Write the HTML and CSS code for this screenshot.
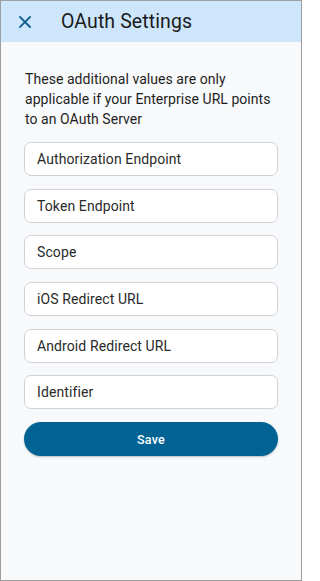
FILE: index.html
```html
<!DOCTYPE html>
<html lang="en">
<head>
<meta charset="utf-8">
<title>OAuth Settings</title>
<link rel="stylesheet" href="styles.css">
</head>
<body>
<div class="frame">
  <header class="appbar">
    <button class="close" aria-label="Close">
      <svg width="12" height="12" viewBox="0 0 12 12"><path d="M1 1 L11 11 M11 1 L1 11" stroke="#0a5f8c" stroke-width="1.8" stroke-linecap="square"/></svg>
    </button>
    <h1 class="title">OAuth Settings</h1>
  </header>
  <main class="content">
    <p class="intro">These additional values are only applicable if your Enterprise URL points to an OAuth Server</p>
    <div class="fields">
      <div class="field">Authorization Endpoint</div>
      <div class="field">Token Endpoint</div>
      <div class="field">Scope</div>
      <div class="field">iOS Redirect URL</div>
      <div class="field">Android Redirect URL</div>
      <div class="field">Identifier</div>
      <button class="save">Save</button>
    </div>
  </main>
</div>
</body>
</html>
```
FILE: styles.css
```css
* { box-sizing: border-box; }
html, body { margin: 0; padding: 0; overflow: hidden; }
body {
  width: 302px;
  height: 581px;
  font-family: Roboto, "Noto Sans", sans-serif;
  background: #ffffff;
}
.frame {
  width: 302px;
  height: 581px;
  border: 1px solid #9e9e9e;
  background: #f8f9fb;
  display: flex;
  flex-direction: column;
}
.appbar {
  height: 41px;
  background: #cde6fb;
  display: flex;
  align-items: center;
  flex-shrink: 0;
}
.close {
  width: 24px;
  height: 24px;
  margin-left: 12px;
  padding: 0;
  border: none;
  background: transparent;
  display: flex;
  align-items: center;
  justify-content: center;
}
.title {
  margin: 0 0 0 24px;
  font-size: 19.5px;
  font-weight: 400;
  color: #1b1b1b;
  letter-spacing: 0.1px;
}
.content {
  padding: 27px 23px 0 23px;
}
.intro {
  margin: 0 0 0 1px;
  font-size: 14px;
  line-height: 20px;
  color: #1f1f1f;
  letter-spacing: 0.05px;
}
.fields {
  margin-top: 13px;
  display: flex;
  flex-direction: column;
  gap: 12.7px;
}
.field {
  height: 34px;
  background: #ffffff;
  border: 1px solid #cfd3d8;
  border-radius: 7px;
  display: flex;
  align-items: center;
  padding-left: 12px;
  font-size: 14px;
  color: #2a2a2a;
  letter-spacing: 0.1px;
}
.save {
  height: 34px;
  border: none;
  border-radius: 17px;
  background: #006394;
  color: #ffffff;
  font-family: Roboto, "Noto Sans", sans-serif;
  font-size: 12.5px;
  font-weight: 500;
  letter-spacing: 0.3px;
  box-shadow: 0 1px 2px rgba(0,0,0,0.25);
}
```
